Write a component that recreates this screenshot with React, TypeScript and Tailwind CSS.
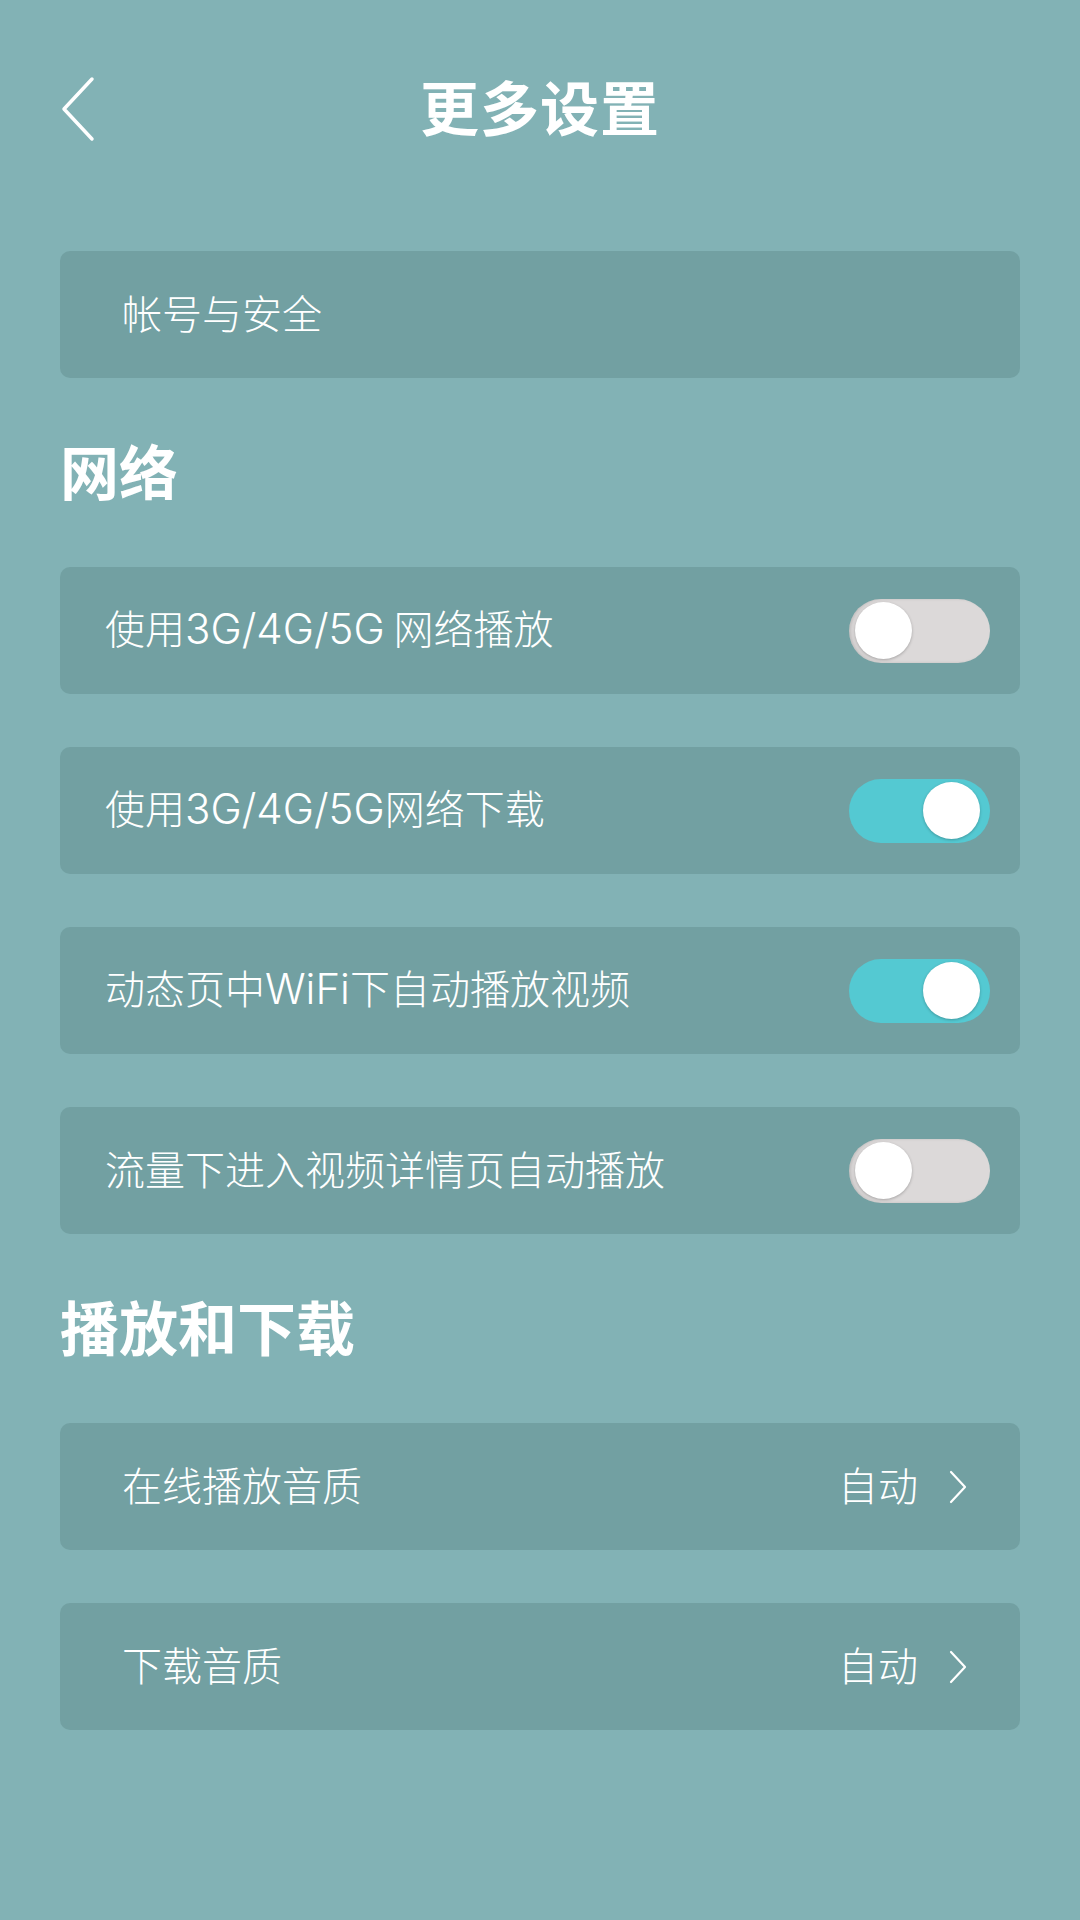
import { useState } from 'react';

type ToggleRow = { label: string; on: boolean };

const networkRows: ToggleRow[] = [
    { label: '使用3G/4G/5G 网络播放', on: false },
    { label: '使用3G/4G/5G网络下载', on: true },
    { label: '动态页中WiFi下自动播放视频', on: true },
    { label: '流量下进入视频详情页自动播放', on: false },
];

const qualityRows = [
    { label: '在线播放音质', value: '自动' },
    { label: '下载音质', value: '自动' },
];

// Latin runs render wider in the original, so give them their own face
function Label({ text }: { text: string }) {
    const parts = text.split(/([A-Za-z0-9/]+(?: (?=[A-Za-z0-9]))?)/).filter(Boolean);
    return (
        <span className="text-[40px] font-light leading-none mb-[5px] whitespace-pre">
            {parts.map((p, i) =>
                /^[A-Za-z0-9/]/.test(p) ? (
                    <span
                        key={i}
                        className="text-[42px] font-light"
                        style={{ fontFamily: 'Inter, "Liberation Sans", sans-serif' }}
                    >
                        {p}
                    </span>
                ) : (
                    <span key={i}>{p}</span>
                )
            )}
        </span>
    );
}

function Toggle({ on, onClick }: { on: boolean; onClick: () => void }) {
    return (
        <button
            onClick={onClick}
            className={`relative w-[141px] h-[64px] rounded-full shrink-0 transition-colors ${
                on ? 'bg-[#54c9d2]' : 'bg-[#dcd9d9] shadow-[inset_2px_0_3px_rgba(0,0,0,0.12)]'
            }`}
        >
            <span
                className={`absolute top-[3.5px] w-[57px] h-[57px] rounded-full bg-white shadow-[0_1px_3px_rgba(0,0,0,0.25)] transition-all ${
                    on ? 'left-[74px]' : 'left-[6px]'
                }`}
            />
        </button>
    );
}

export default function App() {
    const [toggles, setToggles] = useState(networkRows.map((r) => r.on));

    return (
        <div
            className="min-h-[1920px] bg-[#82b2b5] text-white"
            style={{ fontFamily: '"Noto Sans CJK SC", "Noto Sans", sans-serif' }}
        >
            {/* Header */}
            <div className="relative h-[220px] pb-[10px] flex items-center justify-center">
                <button className="absolute left-[58px] top-[74px] w-[40px] h-[70px] flex items-center justify-center">
                    <svg width="38" height="70" viewBox="0 0 38 70" fill="none">
                        <path
                            d="M33 5 L5 35 L33 65"
                            stroke="white"
                            strokeWidth="3.5"
                            strokeLinecap="round"
                            strokeLinejoin="round"
                        />
                    </svg>
                </button>
                <h1 className="text-[59px] font-bold leading-none tracking-[1px]">更多设置</h1>
            </div>

            <div className="px-[60px] pt-[31px]">
                {/* Account */}
                <div className="h-[127px] rounded-[10px] bg-[#72a0a2] flex items-center pl-[62px]">
                    <Label text="帐号与安全" />
                </div>

                {/* Network */}
                <div className="h-[189px] flex items-center">
                    <h2 className="text-[59px] font-bold leading-none mb-[7px]">网络</h2>
                </div>
                <div className="flex flex-col gap-[53px]">
                    {networkRows.map((row, i) => (
                        <div
                            key={row.label}
                            className="h-[127px] rounded-[10px] bg-[#72a0a2] flex items-center justify-between pl-[45px] pr-[30px]"
                        >
                            <Label text={row.label} />
                            <Toggle
                                on={toggles[i]}
                                onClick={() =>
                                    setToggles((t) => t.map((v, j) => (j === i ? !v : v)))
                                }
                            />
                        </div>
                    ))}
                </div>

                {/* Play & download */}
                <div className="h-[189px] flex items-center">
                    <h2 className="text-[59px] font-bold leading-none mb-[7px]">播放和下载</h2>
                </div>
                <div className="flex flex-col gap-[53px]">
                    {qualityRows.map((row) => (
                        <div
                            key={row.label}
                            className="h-[127px] rounded-[10px] bg-[#72a0a2] flex items-center justify-between pl-[62px] pr-[53px]"
                        >
                            <Label text={row.label} />
                            <div className="flex items-center gap-[31px]">
                                <Label text={row.value} />
                                <svg width="18" height="34" viewBox="0 0 18 34" fill="none">
                                    <path
                                        d="M2 2 L16 17 L2 32"
                                        stroke="white"
                                        strokeWidth="2.2"
                                        strokeLinecap="round"
                                        strokeLinejoin="round"
                                    />
                                </svg>
                            </div>
                        </div>
                    ))}
                </div>
            </div>
        </div>
    );
}
